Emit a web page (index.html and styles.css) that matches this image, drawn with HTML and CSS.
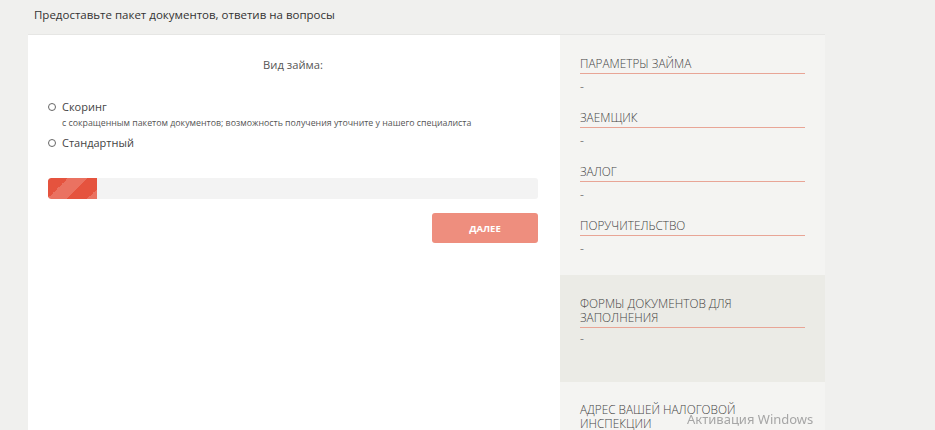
FILE: index.html
```html
<!DOCTYPE html>
<html lang="ru">
<head>
  <meta charset="UTF-8">
  <title>Пакет документов</title>
  <link rel="stylesheet" href="styles.css">
</head>
<body>
  <div class="page-title">Предоставьте пакет документов, ответив на вопросы</div>

  <div class="card">
    <div class="main">
      <div class="question">Вид займа:</div>

      <label class="option">
        <span class="radio"></span>
        <span class="option-text">Скоринг</span>
      </label>
      <div class="option-note">с сокращенным пакетом документов; возможность получения уточните у нашего специалиста</div>

      <label class="option option-second">
        <span class="radio"></span>
        <span class="option-text">Стандартный</span>
      </label>

      <div class="progress">
        <div class="progress-bar" style="width: 10%"></div>
      </div>

      <div class="actions">
        <button class="btn-next">ДАЛЕЕ</button>
      </div>
    </div>

    <div class="sidebar">
      <div class="side-group">
        <div class="side-item">
          <div class="side-title">ПАРАМЕТРЫ ЗАЙМА</div>
          <div class="side-value">-</div>
        </div>
        <div class="side-item">
          <div class="side-title">ЗАЕМЩИК</div>
          <div class="side-value">-</div>
        </div>
        <div class="side-item">
          <div class="side-title">ЗАЛОГ</div>
          <div class="side-value">-</div>
        </div>
        <div class="side-item">
          <div class="side-title">ПОРУЧИТЕЛЬСТВО</div>
          <div class="side-value">-</div>
        </div>
      </div>

      <div class="side-group side-forms">
        <div class="side-item">
          <div class="side-title">ФОРМЫ ДОКУМЕНТОВ ДЛЯ ЗАПОЛНЕНИЯ</div>
          <div class="side-value">-</div>
        </div>
      </div>

      <div class="side-group side-tax">
        <div class="side-item">
          <div class="side-title">АДРЕС ВАШЕЙ НАЛОГОВОЙ ИНСПЕКЦИИ</div>
        </div>
      </div>
    </div>
  </div>

  <div class="watermark">Активация Windows</div>
</body>
</html>
```

FILE: styles.css
```css
body {
  margin: 0;
  font-family: 'Open Sans', 'Noto Sans', sans-serif;
  background-color: #f0f0ee;
  color: #333;
  height: 430px;
  overflow: hidden;
}
.page-title {
  height: 34px;
  line-height: 30px;
  padding-left: 34px;
  font-size: 11.5px;
  color: #333;
}
.card {
  display: flex;
  width: 797px;
  margin-left: 28px;
  border-top: 1px solid #e6e6e4;
  height: 395px;
}
.main {
  flex: 1;
  background-color: #fff;
  padding: 21px 22px 0 20px;
}
.question {
  text-align: center;
  font-size: 11.2px;
  line-height: 18px;
  color: #555;
}
.option {
  display: flex;
  align-items: center;
  margin-top: 25px;
  font-size: 11px;
  line-height: 16px;
  color: #444;
}
.option-second {
  margin-top: 4px;
}
.radio {
  width: 6px;
  height: 6px;
  border: 1px solid #666;
  border-radius: 50%;
  margin-right: 6px;
}
.option-note {
  margin-top: 1px;
  padding-left: 14px;
  font-size: 8.8px;
  line-height: 15px;
  color: #555;
}
.progress {
  margin-top: 27px;
  height: 21px;
  background-color: #f3f3f3;
  border-radius: 3px;
  overflow: hidden;
}
.progress-bar {
  height: 100%;
  border-radius: 3px 0 0 3px;
  background-color: #e5533e;
  background-image: linear-gradient(-45deg, rgba(255,255,255,.18) 25%, transparent 25%, transparent 50%, rgba(255,255,255,.18) 50%, rgba(255,255,255,.18) 75%, transparent 75%, transparent);
  background-size: 40px 40px;
}
.actions {
  display: flex;
  justify-content: flex-end;
  margin-top: 14px;
}
.btn-next {
  width: 106px;
  height: 30px;
  border: none;
  border-radius: 3px;
  background-color: #ee8e7e;
  color: #fff;
  font-family: 'Open Sans', 'Noto Sans', sans-serif;
  font-size: 9.5px;
  font-weight: 700;
  cursor: pointer;
}
.sidebar {
  width: 265px;
  background-color: #f4f4f2;
}
.side-group {
  padding: 21px 20px 18px;
}
.side-item + .side-item {
  margin-top: 15px;
}
.side-title {
  font-size: 11.8px;
  font-weight: 300;
  line-height: 14px;
  color: #444;
  padding-bottom: 3px;
  border-bottom: 1px solid #e8a596;
}
.side-value {
  margin-top: 5px;
  font-size: 12px;
  line-height: 16px;
  color: #888;
}
.side-forms {
  background-color: #ebebe6;
  padding-bottom: 35px;
}
.side-forms .side-value {
  margin-top: 3px;
}
.side-tax {
  padding-top: 20px;
}
.side-tax .side-title {
  border-bottom: none;
}
.watermark {
  position: fixed;
  left: 687px;
  top: 410px;
  font-family: 'Noto Sans', sans-serif;
  font-size: 13px;
  color: #a6a6a6;
}
```
